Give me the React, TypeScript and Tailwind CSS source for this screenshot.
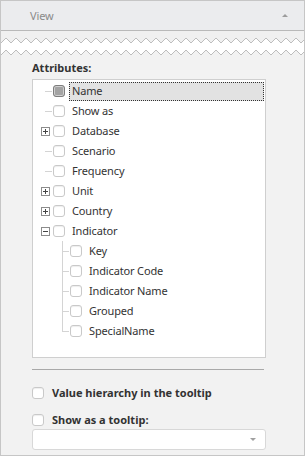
import React from "react";

function zig(y1: number, y2: number, w: number, period: number) {
  const pts: string[] = [];
  let up = false;
  for (let x = 0; x <= w + period; x += period / 2) {
    pts.push(`${x},${up ? y1 : y2}`);
    up = !up;
  }
  return pts.join(" ");
}

function Check({ checked = false }: { checked?: boolean }) {
  return checked ? (
    <span className="block w-[12px] h-[12px] rounded-[3px] border border-[#7d7d7d] bg-[#a3a3a3] shadow-[inset_0_0_0_1px_#cfcfcf] shrink-0" />
  ) : (
    <span className="block w-[12px] h-[12px] rounded-[3px] border border-[#c9c9c9] bg-white shadow-[inset_0_1px_1px_#eeeeee] shrink-0" />
  );
}

function Expander({ kind }: { kind: "none" | "plus" | "minus" }) {
  if (kind === "none") {
    return (
      <span className="relative block w-[9px] h-[9px] shrink-0">
        <span className="absolute left-[4px] top-[4px] w-[7px] h-px bg-[#d4d4d4]" />
      </span>
    );
  }
  return (
    <span className="relative block w-[9px] h-[9px] border border-[#8c8c8c] bg-white shrink-0">
      <span className="absolute left-[1px] top-[3px] w-[5px] h-px bg-[#444]" />
      {kind === "plus" && <span className="absolute left-[3px] top-[1px] w-px h-[5px] bg-[#444]" />}
    </span>
  );
}

type Top = { label: string; kind: "none" | "plus" | "minus"; selected?: boolean };

const top: Top[] = [
  { label: "Name", kind: "none", selected: true },
  { label: "Show as", kind: "none" },
  { label: "Database", kind: "plus" },
  { label: "Scenario", kind: "none" },
  { label: "Frequency", kind: "none" },
  { label: "Unit", kind: "plus" },
  { label: "Country", kind: "plus" },
  { label: "Indicator", kind: "minus" },
];

const children = ["Key", "Indicator Code", "Indicator Name", "Grouped", "SpecialName"];

export default function App() {
  return (
    <div className="w-[305px] h-[456px] border border-[#c6c6c6] bg-[#f2f2f2] flex flex-col text-[11px] text-[#333] font-['Segoe_UI','Noto_Sans',sans-serif] overflow-hidden">
      <div className="h-[30px] shrink-0 bg-[#ebecee] border-b border-[#b9b9b9] flex items-center pl-[29px] pr-[16px]">
        <span className="text-[#8a8a8a] leading-none tracking-[-0.15px]">View</span>
        <span className="ml-auto w-0 h-0 border-l-[3px] border-r-[3px] border-b-[3px] border-l-transparent border-r-transparent border-b-[#9c9c9c]" />
      </div>
      <svg width="303" height="25" className="block shrink-0">
        <rect x="0" y="0" width="303" height="25" fill="#ffffff" />
        <polygon points={`0,0 ${zig(7, 12, 303, 10)} 320,0`} fill="#f0f0f0" />
        <polyline points={zig(7, 12, 303, 10)} fill="none" stroke="#bdbdbd" strokeWidth="1" />
        <polygon points={`0,25 ${zig(19, 24, 303, 10)} 320,25`} fill="#f2f2f2" />
        <polyline points={zig(19, 24, 303, 10)} fill="none" stroke="#bdbdbd" strokeWidth="1" />
      </svg>
      <div className="ml-[31px] w-[234px] flex flex-col">
        <div className="mt-[4px] h-[16px] leading-[16px] font-bold">Attributes:</div>
        <div className="mt-[3px] h-[279px] border border-[#cfcfcf] bg-white flex flex-col pt-[1px] tracking-[-0.15px]">
          {top.map((t) => (
            <div key={t.label} className="flex items-center h-[20px] shrink-0">
              <span className="w-[8px] shrink-0" />
              <Expander kind={t.kind} />
              <span className="w-[3px] shrink-0" />
              <Check checked={t.selected} />
              <span
                className={
                  "ml-[4px] h-[19px] flex items-center pl-[3px] " +
                  (t.selected ? "flex-1 mr-[1px] bg-[#e2e2e2] outline-1 outline-dotted outline-offset-[-1px] outline-[#333]" : "")
                }
              >
                {t.label}
              </span>
            </div>
          ))}
          {children.map((c, i) => (
            <div key={c} className="flex items-center h-[20px] shrink-0">
              <span className="w-[29px] shrink-0" />
              <span className="relative block w-[8px] h-[20px] shrink-0">
                <span
                  className={
                    "absolute left-0 top-0 w-px bg-[#d4d4d4] " + (i === children.length - 1 ? "h-[10px]" : "h-[20px]")
                  }
                />
                <span className="absolute left-0 top-[10px] w-[7px] h-px bg-[#d4d4d4]" />
              </span>
              <Check />
              <span className="ml-[7px]">{c}</span>
            </div>
          ))}
        </div>
        <div className="mt-[11px] mr-[2px] border-t border-[#a9a9a9]" />
        <div className="mt-[13px] h-[20px] flex items-center">
          <Check />
          <span className="ml-[8px] font-bold">Value hierarchy in the tooltip</span>
        </div>
        <div className="mt-[8px] h-[18px] flex items-center">
          <Check />
          <span className="ml-[8px] font-bold">Show as a tooltip:</span>
        </div>
        <div className="h-[21px] rounded-[3px] border border-[#d8d8d8] bg-white flex items-center justify-end pr-[9px]">
          <span className="w-0 h-0 border-l-[3px] border-r-[3px] border-t-[3px] border-l-transparent border-r-transparent border-t-[#a0a0a0]" />
        </div>
      </div>
    </div>
  );
}
